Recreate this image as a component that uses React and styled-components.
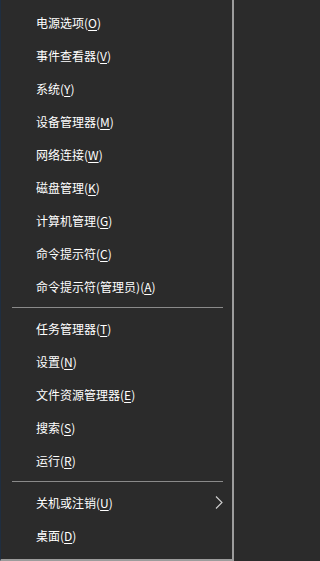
import React from 'react';
import styled, { createGlobalStyle } from 'styled-components';

const GlobalStyle = createGlobalStyle`
    html, body {
        margin: 0;
        padding: 0;
        background: #2b2b2b;
    }
`;

const Menu = styled.nav`
    box-sizing: border-box;
    width: 234px;
    height: 561px;
    padding-top: 6px;
    background: #2b2b2b;
    border-left: 1px solid #1f2e40;
    border-right: 2px solid #9c9c9c;
    border-bottom: 2px solid #9c9c9c;
    font-family: "Noto Sans CJK SC", "Noto Sans", sans-serif;
    font-size: 12px;
    color: #ffffff;
`;

const Item = styled.div`
    display: flex;
    align-items: center;
    height: 33px;
    padding: 0 9px 0 35px;
    white-space: nowrap;
`;

const Key = styled.span`
    text-decoration: underline;
    text-underline-offset: 2px;
`;

const Separator = styled.div`
    height: 9px;
    display: flex;
    align-items: center;
    padding: 0 9px 0 11px;

    &::after {
        content: '';
        flex: 1;
        height: 1px;
        background: #8a8a8a;
    }
`;

const Chevron = styled.svg`
    margin-left: auto;
    width: 8px;
    height: 13px;
`;

const groups = [
    [
        ['电源选项', 'O'],
        ['事件查看器', 'V'],
        ['系统', 'Y'],
        ['设备管理器', 'M'],
        ['网络连接', 'W'],
        ['磁盘管理', 'K'],
        ['计算机管理', 'G'],
        ['命令提示符', 'C'],
        ['命令提示符(管理员)', 'A'],
    ],
    [
        ['任务管理器', 'T'],
        ['设置', 'N'],
        ['文件资源管理器', 'E'],
        ['搜索', 'S'],
        ['运行', 'R'],
    ],
    [
        ['关机或注销', 'U', true],
        ['桌面', 'D'],
    ],
];

function MenuItem({ label, hotkey, sub }) {
    return (
        <Item>
            <span>
                {label}(<Key>{hotkey}</Key>)
            </span>
            {sub && (
                <Chevron viewBox="0 0 8 13">
                    <polyline points="1,0.5 7,6.5 1,12.5" fill="none" stroke="#d0d0d0" strokeWidth="1.1" />
                </Chevron>
            )}
        </Item>
    );
}

export default function App() {
    return (
        <>
            <GlobalStyle />
            <Menu>
                {groups.map((group, gi) => (
                    <React.Fragment key={gi}>
                        {gi > 0 && <Separator />}
                        {group.map(([label, hotkey, sub]) => (
                            <MenuItem key={label} label={label} hotkey={hotkey} sub={sub} />
                        ))}
                    </React.Fragment>
                ))}
            </Menu>
        </>
    );
}
